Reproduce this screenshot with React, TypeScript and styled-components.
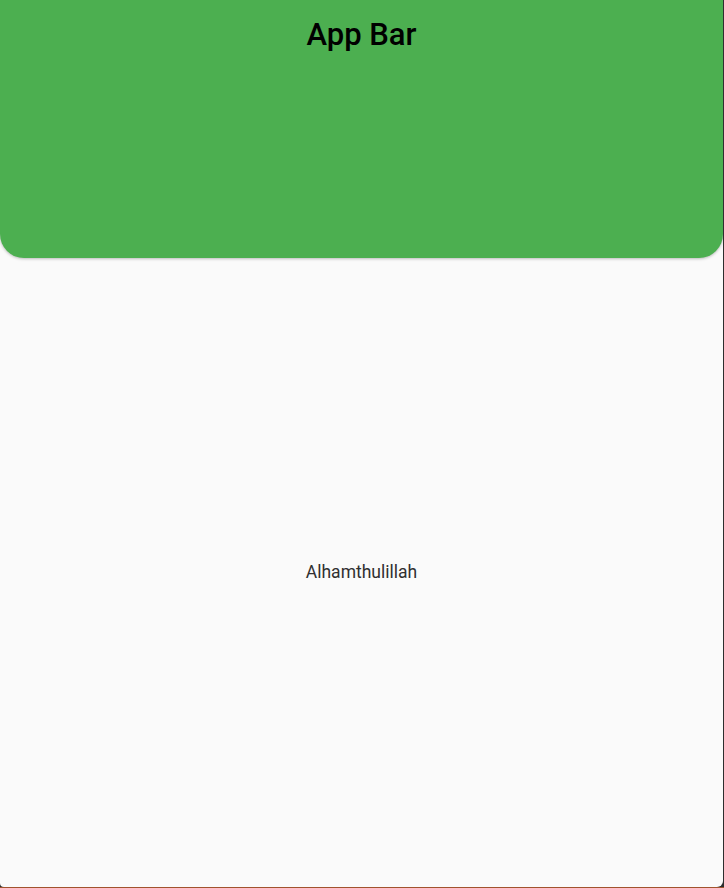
import * as React from "react";
import styled, { createGlobalStyle } from "styled-components";

const GlobalStyle = createGlobalStyle`
  html, body, #root {
    margin: 0;
    padding: 0;
    height: 100%;
  }
  body {
    font-family: Roboto, "Noto Sans", sans-serif;
    overflow: hidden;
  }
`;

const Desktop = styled.div`
  height: 888px;
  box-sizing: border-box;
  padding: 0 1px 1px 0;
  background: linear-gradient(to top, #a0522d 1px, #2e2e2e 1px);
`;

const Window = styled.div`
  height: 100%;
  display: flex;
  flex-direction: column;
  background: #fafafa;
  border-radius: 0 0 6px 4px;
  overflow: hidden;
`;

const AppBar = styled.header`
  height: 258px;
  flex-shrink: 0;
  display: flex;
  justify-content: center;
  align-items: flex-start;
  background: #4caf50;
  border-radius: 0 0 24px 24px;
  box-shadow: 0 1px 3px rgba(0, 0, 0, 0.25);
  position: relative;
  z-index: 1;
`;

const Title = styled.h1`
  margin: 15px 0 0;
  font-size: 31px;
  font-weight: 500;
  line-height: 40px;
  color: #000;
`;

const Body = styled.main`
  flex: 1;
  display: flex;
  align-items: center;
  justify-content: center;
`;

const Message = styled.span`
  font-size: 17.5px;
  color: #303030;
  margin-top: -2px;
`;

export default function App() {
  return (
    <>
      <GlobalStyle />
      <Desktop>
        <Window>
          <AppBar>
            <Title>App Bar</Title>
          </AppBar>
          <Body>
            <Message>Alhamthulillah</Message>
          </Body>
        </Window>
      </Desktop>
    </>
  );
}
